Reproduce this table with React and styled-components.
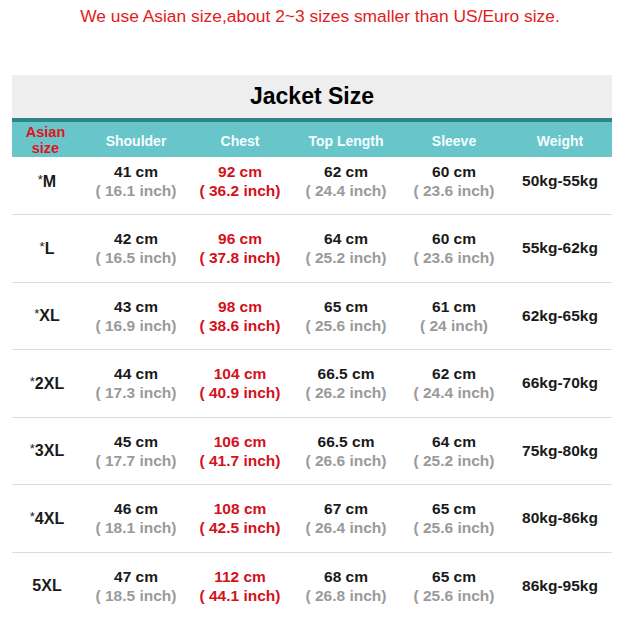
import React from 'react';
import styled, { createGlobalStyle } from 'styled-components';

const rows = [
    { size: 'M', star: true, shoulder: [41, 16.1], chest: [92, 36.2], length: [62, 24.4], sleeve: [60, 23.6], weight: '50kg-55kg' },
    { size: 'L', star: true, shoulder: [42, 16.5], chest: [96, 37.8], length: [64, 25.2], sleeve: [60, 23.6], weight: '55kg-62kg' },
    { size: 'XL', star: true, shoulder: [43, 16.9], chest: [98, 38.6], length: [65, 25.6], sleeve: [61, 24], weight: '62kg-65kg' },
    { size: '2XL', star: true, shoulder: [44, 17.3], chest: [104, 40.9], length: [66.5, 26.2], sleeve: [62, 24.4], weight: '66kg-70kg' },
    { size: '3XL', star: true, shoulder: [45, 17.7], chest: [106, 41.7], length: [66.5, 26.6], sleeve: [64, 25.2], weight: '75kg-80kg' },
    { size: '4XL', star: true, shoulder: [46, 18.1], chest: [108, 42.5], length: [67, 26.4], sleeve: [65, 25.6], weight: '80kg-86kg' },
    { size: '5XL', star: false, shoulder: [47, 18.5], chest: [112, 44.1], length: [68, 26.8], sleeve: [65, 25.6], weight: '86kg-95kg' },
];

const App = () => {
    return (
        <>
            <Global />
            <Page>
                <Notice>We use Asian size,about 2~3 sizes smaller than US/Euro size.</Notice>
                <Chart>
                    <Title>Jacket Size</Title>
                    <HeadRow>
                        <HeadCell className="asian">Asian<br />size</HeadCell>
                        <HeadCell>Shoulder</HeadCell>
                        <HeadCell>Chest</HeadCell>
                        <HeadCell>Top Length</HeadCell>
                        <HeadCell>Sleeve</HeadCell>
                        <HeadCell>Weight</HeadCell>
                    </HeadRow>
                    {rows.map((r, i) => (
                        <Row key={r.size} first={i === 0}>
                            <SizeCell>{r.star && <sup>*</sup>}{r.size}</SizeCell>
                            <Measure value={r.shoulder} />
                            <Measure value={r.chest} red />
                            <Measure value={r.length} />
                            <Measure value={r.sleeve} />
                            <WeightCell>{r.weight}</WeightCell>
                        </Row>
                    ))}
                    <BottomBar />
                </Chart>
            </Page>
        </>
    );
}

const Measure = ({ value, red }) => (
    <Cell>
        <Cm red={red}>{value[0]} cm</Cm>
        <Inch red={red}>( {value[1]} inch)</Inch>
    </Cell>
);

const Global = createGlobalStyle`
    body {
        margin: 0;
        background: #fff;
        font-family: "Liberation Sans", Arial, sans-serif;
    }
`;

const Page = styled.div`
    width: 640px;
    height: 617px;
    overflow: hidden;
    padding-top: 5px;
    box-sizing: border-box;
`;

const Notice = styled.div`
    text-align: center;
    color: #e11b22;
    font-size: 17.4px;
    line-height: 22px;
    margin-bottom: 48px;
`;

const Chart = styled.div`
    width: 600px;
    margin-left: 12px;
`;

const Title = styled.div`
    background: #eeeeee;
    height: 43px;
    display: flex;
    align-items: center;
    justify-content: center;
    font-size: 23px;
    font-weight: bold;
    color: #000;
    border-bottom: 4px solid #2e8587;
`;

const cols = '72px 104px 104px 108px 108px 104px';

const HeadRow = styled.div`
    display: grid;
    grid-template-columns: ${cols};
    height: 35px;
    background: #68c5ca;
    align-items: center;
`;

const HeadCell = styled.div`
    text-align: center;
    color: #f4ffff;
    font-weight: bold;
    font-size: 14px;
    padding-top: 2px;
    &.asian {
        color: #e0141c;
        font-size: 14.5px;
        line-height: 16px;
        padding-top: 0;
        padding-right: 5px;
    }
`;

const Row = styled.div`
    display: grid;
    grid-template-columns: ${cols};
    height: ${p => p.first ? '58px' : '67.5px'};
    padding-bottom: ${p => p.first ? '9px' : '0'};
    box-sizing: border-box;
    align-items: center;
    border-bottom: 1px solid #dcdcdc;
    &:last-of-type { border-bottom: none; }
`;

const Cell = styled.div`
    display: flex;
    flex-direction: column;
    align-items: center;
    font-weight: bold;
    font-size: 15.5px;
    line-height: 19px;
`;

const Cm = styled.span`
    color: ${p => p.red ? '#d4111b' : '#1a1a1a'};
`;

const Inch = styled.span`
    color: ${p => p.red ? '#d4111b' : '#9a9a9a'};
`;

const SizeCell = styled.div`
    text-align: center;
    font-weight: bold;
    font-size: 16px;
    color: #1a1a1a;
    padding-right: 2px;
    sup {
        font-weight: normal;
        font-size: 13px;
        vertical-align: 3px;
    }
`;

const WeightCell = styled.div`
    text-align: center;
    font-weight: bold;
    font-size: 15.5px;
    color: #1a1a1a;
`;

const BottomBar = styled.div`
    height: 4px;
    background: #c8c8c8;
    box-shadow: 0 1px 2px rgba(0,0,0,0.15);
`;

export default App;
